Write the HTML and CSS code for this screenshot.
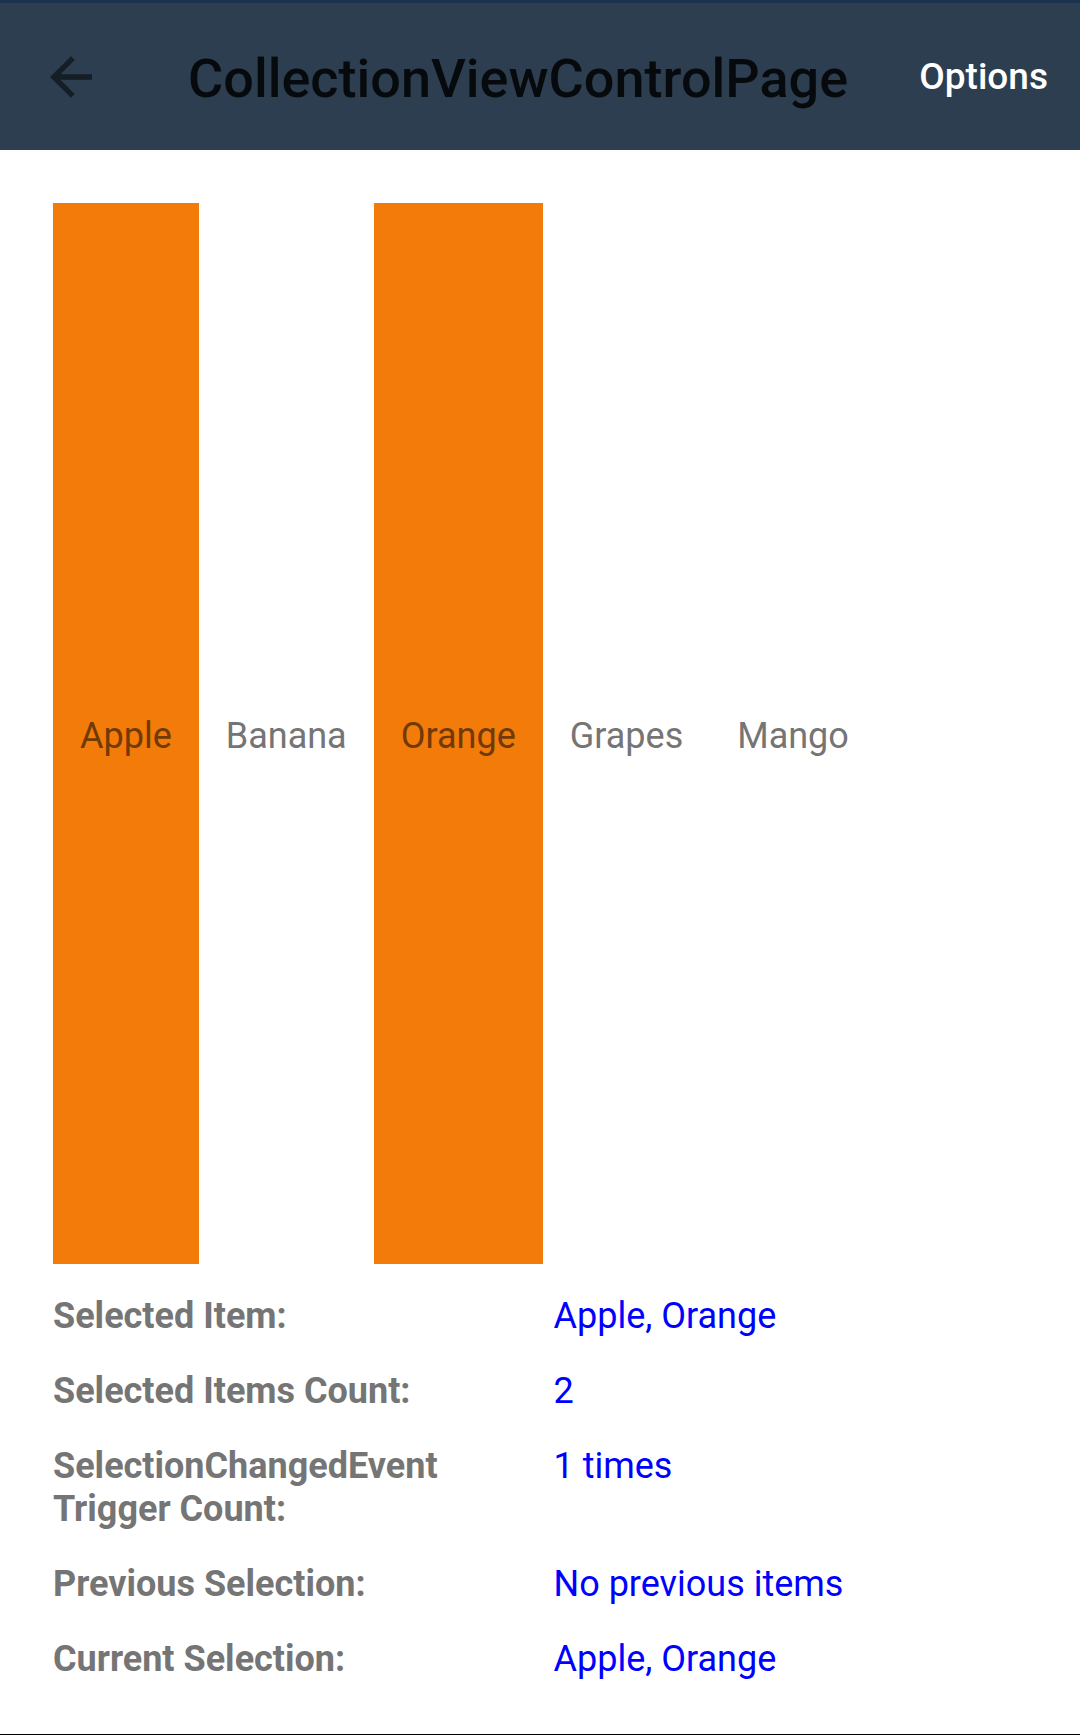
FILE: index.html
```html
<!DOCTYPE html>
<html lang="en">
<head>
<meta charset="utf-8">
<meta name="viewport" content="width=device-width, initial-scale=1">
<title>CollectionViewControlPage</title>
<link rel="stylesheet" href="styles.css">
</head>
<body>
<header class="toolbar">
  <button class="back" type="button" aria-label="Back">
    <svg class="back-icon" viewBox="0 0 42 42" width="42" height="42" aria-hidden="true"><path d="M42 18.200H10.500L24.700 4 21 0.200 0 21 21 41.800 24.700 38 10.500 23.800H42Z"/></svg>
  </button>
  <h1 class="title">CollectionViewControlPage</h1>
  <button class="options" type="button">Options</button>
</header>
<main class="page">
  <ul class="collection">
    <li class="item selected">Apple</li>
    <li class="item">Banana</li>
    <li class="item selected">Orange</li>
    <li class="item">Grapes</li>
    <li class="item">Mango</li>
  </ul>
  <dl class="details">
    <dt>Selected Item:</dt><dd>Apple, Orange</dd>
    <dt>Selected Items Count:</dt><dd>2</dd>
    <dt>SelectionChangedEvent Trigger Count:</dt><dd>1 times</dd>
    <dt>Previous Selection:</dt><dd>No previous items</dd>
    <dt>Current Selection:</dt><dd>Apple, Orange</dd>
  </dl>
</main>
</body>
</html>
```
FILE: styles.css
```css
* { box-sizing: border-box; }

body {
  display: flex;
  flex-direction: column;
  min-height: 100vh;
  margin: 0;
  background: #fff;
  border-bottom: 1px solid #000;
  color: #757575;
  font: 36px/43px Roboto, sans-serif;
}

.toolbar {
  display: flex;
  align-items: center;
  height: 150px;
  padding: 0 32px 0 50px;
  border-top: 3px solid #1c334d;
  background: #2d3e50;
}

.back, .options {
  padding: 0;
  border: 0;
  background: none;
  font: inherit;
}

.back { display: flex; }
.back-icon { fill: #151d26; }

.title {
  margin: 0 0 0 96px;
  padding-top: 4px;
  color: #070a0d;
  font-size: 54px;
  font-weight: 500;
  line-height: 62px;
}

.options {
  margin-left: auto;
  color: #fff;
  font-size: 37px;
  font-weight: 500;
}

.page {
  display: flex;
  flex: 1;
  flex-direction: column;
  padding: 53px;
}

.collection {
  display: flex;
  flex: 1;
  margin: 0;
  padding: 0;
  list-style: none;
}

.item {
  display: flex;
  align-items: center;
  padding: 5px 27px 0;
}

.selected {
  background: #f27b0a;
  color: #713a05;
}

.details {
  display: grid;
  grid-template-columns: 1fr 1fr;
  gap: 32px 27px;
  margin: 31px 0 0;
}

dt { font-weight: 700; }

dd {
  margin: 0;
  color: #00f;
}
```
